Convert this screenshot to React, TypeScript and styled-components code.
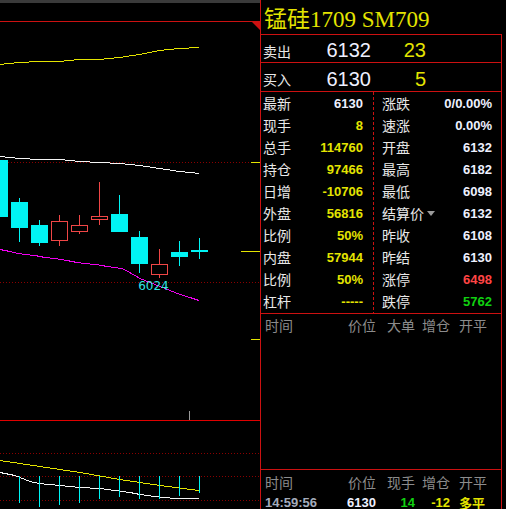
import React from "react";
import styled, { createGlobalStyle } from "styled-components";

const RED = "#cc1111";
const CYAN = "#00f4f4";
const CANDLE_RED = "#f04646";
const YELLOW = "#e4e400";
const WHITE = "#eef0ff";

const GlobalStyle = createGlobalStyle`
  html, body {
    margin: 0;
    padding: 0;
    background: #000;
  }
  body {
    width: 506px;
    height: 509px;
    overflow: hidden;
    font-family: "Liberation Sans", "Noto Sans CJK SC", sans-serif;
  }
`;

// chart data, pixel coordinates of the drawing
const candles = [
  { x: 11, top: 202, bottom: 228, hi: 198, lo: 242, up: false },
  { x: 31, top: 225, bottom: 243, hi: 220, lo: 246, up: false },
  { x: 51, top: 221, bottom: 240, hi: 215, lo: 245, up: true },
  { x: 71, top: 225, bottom: 231, hi: 215, lo: 233, up: true },
  { x: 91, top: 216, bottom: 219, hi: 182, lo: 224, up: true },
  { x: 111, top: 214, bottom: 232, hi: 195, lo: 232, up: false },
  { x: 131, top: 237, bottom: 264, hi: 231, lo: 273, up: false },
  { x: 151, top: 264, bottom: 274, hi: 249, lo: 277, up: true },
  { x: 171, top: 252, bottom: 257, hi: 241, lo: 266, up: false },
  { x: 191, top: 250, bottom: 252, hi: 238, lo: 259, up: false },
];

const maYellow = [
  [0, 4, 64], [4, 14, 63], [14, 29, 62], [29, 64, 61], [64, 74, 60],
  [74, 104, 59], [104, 114, 58], [114, 123, 57], [123, 129, 56], [129, 136, 55],
  [136, 142, 54], [142, 147, 53], [147, 152, 52], [152, 157, 51], [157, 164, 50],
  [164, 174, 49], [174, 189, 48], [189, 199, 47],
];

const maWhite = [
  [0, 5, 156], [5, 15, 157], [15, 30, 158], [30, 65, 159], [65, 75, 160],
  [75, 90, 161], [90, 110, 162], [110, 125, 163], [125, 135, 164], [135, 143, 165],
  [143, 150, 166], [150, 156, 167], [156, 163, 168], [163, 170, 169], [170, 176, 170],
  [176, 185, 171], [185, 195, 172], [195, 199, 173],
];

const maMagenta =
  "0,249.5 10,251.5 18,253.5 25,254.5 35,255.5 45,257.5 55,258.5 67,260.5 77,262.5 85,263.5 95,264.5 102,265.5 107,266.5 114,267.5 122,268.5 126,270.5 133,274.5 140,278.5 150,282.5 160,286.5 170,290.5 180,294.5 190,297.5 199,300.5";

const volYellow =
  "0,460.5 40,466.5 80,472.5 120,479.5 160,485.5 199,490.5";
const volWhite =
  "0,472.5 5,473.5 10,474.5 15,475.5 20,477.5 25,479.5 30,481.5 39,483.5 60,485.5 80,487.5 100,488.5 115,490.5 130,492.5 140,494.5 155,496.5 165,497.5 175,498.5 199,498.5";

const volBars = [
  [19, 503], [39, 507], [59, 505], [79, 503], [99, 499],
  [119, 497], [139, 499], [159, 499], [179, 496], [199, 493],
];

function Steps({ data, color }: { data: number[][]; color: string }) {
  return (
    <g fill={color}>
      {data.map(([x0, x1, y]) => (
        <rect key={x0} x={x0} y={y} width={x1 - x0} height={1} />
      ))}
    </g>
  );
}

function Dotted({ y, x0 = 0, x1 = 260 }: { y: number; x0?: number; x1?: number }) {
  return (
    <line
      x1={x0}
      x2={x1}
      y1={y + 0.5}
      y2={y + 0.5}
      stroke="#8a0000"
      strokeWidth={1}
      strokeDasharray="1 2"
    />
  );
}

type Candle = (typeof candles)[number];

// a rising bar is drawn hollow: four 1px edges and the two wicks
function HollowCandle({ c }: { c: Candle }) {
  const h = c.bottom - c.top + 1;
  return (
    <g fill={CANDLE_RED}>
      <rect x={c.x + 8} y={c.hi} width={1} height={c.top - c.hi} />
      <rect x={c.x + 8} y={c.bottom + 1} width={1} height={c.lo - c.bottom} />
      <rect x={c.x} y={c.top} width={17} height={1} />
      <rect x={c.x} y={c.bottom} width={17} height={1} />
      <rect x={c.x} y={c.top} width={1} height={h} />
      <rect x={c.x + 16} y={c.top} width={1} height={h} />
    </g>
  );
}

function SolidCandle({ c }: { c: Candle }) {
  return (
    <g fill={CYAN}>
      <rect x={c.x + 8} y={c.hi} width={1} height={c.lo - c.hi} />
      <rect x={c.x} y={c.top} width={17} height={c.bottom - c.top} />
    </g>
  );
}

function KChart() {
  return (
    <svg width="260" height="509" shapeRendering="crispEdges">
      <rect x="0" y="0" width="260" height="3" fill="#3a3a3a" />
      <rect x="0" y="21" width="260" height="1" fill={RED} />
      <polygon points="251,21 260,21 260,30" fill={RED} shapeRendering="auto" />

      <Steps data={maYellow} color={YELLOW} />
      <Dotted y={162} x0={8} x1={250} />
      <Dotted y={282} />
      <rect x="251" y="162" width="9" height="1" fill={YELLOW} />
      <rect x="241" y="251" width="19" height="1" fill={YELLOW} />
      <rect x="251" y="339" width="9" height="1" fill={YELLOW} />

      <Steps data={maWhite} color="#f4f4f4" />

      <rect x="0" y="160" width="8" height="57" fill={CYAN} />
      {candles.map((c) =>
        c.up ? <HollowCandle key={c.x} c={c} /> : <SolidCandle key={c.x} c={c} />,
      )}

      <polyline points={maMagenta} fill="none" stroke="#f000f0" strokeWidth={1} />
      <text
        x="153.5"
        y="290"
        textAnchor="middle"
        fill="#30e4e4"
        fontSize="12"
        fontFamily="'DejaVu Sans', sans-serif"
        shapeRendering="auto">
        6024
      </text>

      <rect x="189" y="411" width="1" height="9" fill="#999" />
      <rect x="0" y="420" width="260" height="1" fill="#e00000" />

      <Dotted y={453} />
      <Dotted y={476} />
      <Dotted y={500} />
      <polyline points={volYellow} fill="none" stroke={YELLOW} strokeWidth={1} />
      <polyline points={volWhite} fill="none" stroke="#f4f4f4" strokeWidth={1} />
      {volBars.map(([x, b]) => (
        <rect key={x} x={x} y={476} width={1} height={b - 476} fill={CYAN} />
      ))}
    </svg>
  );
}

const Screen = styled.div`
  display: flex;
  width: 506px;
  height: 509px;
  background: #000;
  overflow: hidden;
`;

const ChartArea = styled.div`
  flex: 0 0 260px;
  height: 509px;
  svg {
    display: block;
  }
`;

const Panel = styled.div`
  flex: 0 0 246px;
  display: flex;
  flex-direction: column;
  border-left: 1px solid ${RED};
  box-sizing: border-box;
`;

const Title = styled.div`
  height: 34px;
  box-sizing: border-box;
  padding: 5px 0 0 3px;
  line-height: 29px;
  font-family: "Liberation Serif", "Noto Sans CJK SC", serif;
  font-size: 23px;
  color: ${YELLOW};
  white-space: nowrap;
`;

const Board = styled.div`
  width: 241px;
  flex: 1;
  box-sizing: border-box;
  border-top: 1px solid ${RED};
  border-right: 1px solid ${RED};
  display: flex;
  flex-direction: column;
`;

const QuoteRow = styled.div<{ $h: number }>`
  height: ${(p) => p.$h}px;
  border-bottom: 1px solid ${RED};
  display: flex;
  align-items: center;
`;

const QuoteLabel = styled.div`
  width: 58px;
  padding-left: 2px;
  padding-top: 4px;
  font-family: "Noto Sans CJK SC", sans-serif;
  font-size: 14px;
  color: #e8e8e8;
`;

const QuotePrice = styled.div`
  width: 50px;
  padding-top: 4px;
  text-align: right;
  font-size: 20px;
  color: ${WHITE};
`;

const QuoteVol = styled.div`
  width: 55px;
  padding-top: 4px;
  text-align: right;
  font-size: 20px;
  color: ${YELLOW};
`;

const StatsGrid = styled.div`
  height: 221px;
  border-bottom: 1px solid ${RED};
  display: flex;
`;

const StatsCol = styled.div<{ $w?: number; $padL: number; $padR: number }>`
  ${(p) => (p.$w ? `width: ${p.$w}px;` : "flex: 1;")}
  box-sizing: border-box;
  padding: 0 ${(p) => p.$padR}px 0 ${(p) => p.$padL}px;
  display: flex;
  flex-direction: column;
`;

const Divider = styled.div`
  width: 1px;
  background: repeating-linear-gradient(to bottom, ${RED} 0 3px, transparent 3px 5px);
`;

const StatRow = styled.div`
  height: 22px;
  display: flex;
  align-items: center;
  justify-content: space-between;
`;

const StatLabel = styled.span`
  font-family: "Noto Sans CJK SC", sans-serif;
  font-size: 14px;
  color: #e8e8e8;
  display: flex;
  align-items: center;
`;

const StatValue = styled.span<{ $color: string }>`
  font-size: 13px;
  font-weight: 700;
  color: ${(p) => p.$color};
`;

const Caret = styled.span`
  margin-left: 3px;
  width: 0;
  height: 0;
  border-left: 4px solid transparent;
  border-right: 4px solid transparent;
  border-top: 5px solid #9a9a9a;
`;

const TickSection = styled.div`
  height: 155px;
  border-bottom: 1px solid ${RED};
`;

const TickRow = styled.div<{ $h: number }>`
  height: ${(p) => p.$h}px;
  display: flex;
  align-items: center;
`;

const TickCell = styled.div<{ $w: number; $align: string; $pad: string; $color: string; $head?: boolean }>`
  width: ${(p) => p.$w}px;
  box-sizing: border-box;
  padding: ${(p) => p.$pad};
  text-align: ${(p) => p.$align};
  color: ${(p) => p.$color};
  white-space: nowrap;
  font-family: ${(p) => (p.$head ? `"Noto Sans CJK SC", sans-serif` : `"Liberation Sans", "Noto Sans CJK SC", sans-serif`)};
  font-size: ${(p) => (p.$head ? 14 : 13)}px;
  font-weight: ${(p) => (p.$head ? 400 : 700)};
`;

const tickCols = [
  { w: 82, align: "left", pad: "0 0 0 4px" },
  { w: 34, align: "right", pad: "0 1px 0 0" },
  { w: 41, align: "right", pad: "0 3px 0 0" },
  { w: 34, align: "right", pad: "0 2px 0 0" },
  { w: 48, align: "left", pad: "0 0 0 7px" },
];

const GRAY = "#8c8c8c";

const leftStats = [
  ["最新", "6130", WHITE],
  ["现手", "8", YELLOW],
  ["总手", "114760", YELLOW],
  ["持仓", "97466", YELLOW],
  ["日增", "-10706", YELLOW],
  ["外盘", "56816", YELLOW],
  ["比例", "50%", YELLOW],
  ["内盘", "57944", YELLOW],
  ["比例", "50%", YELLOW],
  ["杠杆", "-----", YELLOW],
];

const rightStats = [
  ["涨跌", "0/0.00%", WHITE],
  ["速涨", "0.00%", WHITE],
  ["开盘", "6132", WHITE],
  ["最高", "6182", WHITE],
  ["最低", "6098", WHITE],
  ["结算价", "6132", WHITE],
  ["昨收", "6108", WHITE],
  ["昨结", "6130", WHITE],
  ["涨停", "6498", "#ff4444"],
  ["跌停", "5762", "#10d010"],
];

function TickLine({ cells, head, h }: { cells: [string, string][]; head?: boolean; h: number }) {
  return (
    <TickRow $h={h}>
      {cells.map(([text, color], i) => (
        <TickCell
          key={i}
          $w={tickCols[i].w}
          $align={tickCols[i].align}
          $pad={tickCols[i].pad}
          $color={color}
          $head={head}>
          {text}
        </TickCell>
      ))}
    </TickRow>
  );
}

export default function App() {
  return (
    <Screen>
      <GlobalStyle />
      <ChartArea>
        <KChart />
      </ChartArea>
      <Panel>
        <Title>锰硅1709 SM709</Title>
        <Board>
          <QuoteRow $h={27}>
            <QuoteLabel>卖出</QuoteLabel>
            <QuotePrice>6132</QuotePrice>
            <QuoteVol>23</QuoteVol>
          </QuoteRow>
          <QuoteRow $h={28}>
            <QuoteLabel>买入</QuoteLabel>
            <QuotePrice>6130</QuotePrice>
            <QuoteVol>5</QuoteVol>
          </QuoteRow>
          <StatsGrid>
            <StatsCol $w={112} $padL={2} $padR={10}>
              {leftStats.map(([label, value, color], i) => (
                <StatRow key={i}>
                  <StatLabel>{label}</StatLabel>
                  <StatValue $color={color}>{value}</StatValue>
                </StatRow>
              ))}
            </StatsCol>
            <Divider />
            <StatsCol $padL={8} $padR={9}>
              {rightStats.map(([label, value, color], i) => (
                <StatRow key={i}>
                  <StatLabel>
                    {label}
                    {label === "结算价" && <Caret />}
                  </StatLabel>
                  <StatValue $color={color}>{value}</StatValue>
                </StatRow>
              ))}
            </StatsCol>
          </StatsGrid>
          <TickSection>
            <TickLine
              h={22}
              head
              cells={[
                ["时间", GRAY],
                ["价位", GRAY],
                ["大单", GRAY],
                ["增仓", GRAY],
                ["开平", GRAY],
              ]}
            />
          </TickSection>
          <TickLine
            h={23}
            head
            cells={[
              ["时间", GRAY],
              ["价位", GRAY],
              ["现手", GRAY],
              ["增仓", GRAY],
              ["开平", GRAY],
            ]}
          />
          <TickLine
            h={19}
            cells={[
              ["14:59:56", "#a4acbc"],
              ["6130", WHITE],
              ["14", "#10d010"],
              ["-12", YELLOW],
              ["多平", YELLOW],
            ]}
          />
        </Board>
      </Panel>
    </Screen>
  );
}
